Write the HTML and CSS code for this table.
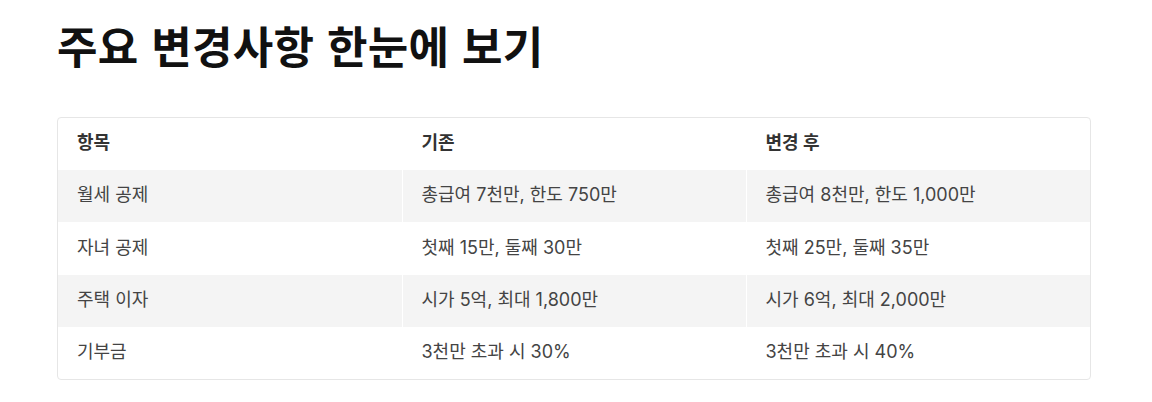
FILE: index.html
```html
<!DOCTYPE html>
<html lang="ko">
<head>
<meta charset="utf-8">
<link rel="stylesheet" href="styles.css">
</head>
<body>
<main class="page">
  <h1 class="title">주요 변경사항 한눈에 보기</h1>
  <div class="table-wrap">
    <table class="cmp">
      <thead>
        <tr><th>항목</th><th>기존</th><th>변경 후</th></tr>
      </thead>
      <tbody>
        <tr><td>월세 공제</td><td>총급여 7천만, 한도 750만</td><td>총급여 8천만, 한도 1,000만</td></tr>
        <tr><td>자녀 공제</td><td>첫째 15만, 둘째 30만</td><td>첫째 25만, 둘째 35만</td></tr>
        <tr><td>주택 이자</td><td>시가 5억, 최대 1,800만</td><td>시가 6억, 최대 2,000만</td></tr>
        <tr><td>기부금</td><td>3천만 초과 시 30%</td><td>3천만 초과 시 40%</td></tr>
      </tbody>
    </table>
  </div>
</main>
</body>
</html>
```
FILE: styles.css
```css
html, body {
  margin: 0;
  padding: 0;
  background: #ffffff;
}
body {
  font-family: "Inter", "Noto Sans CJK KR", sans-serif;
  color: #333333;
}
.page {
  padding: 15px 61px 0 57px;
}
.title {
  margin: 0 0 42px 0;
  font-family: "Noto Sans CJK KR", sans-serif;
  font-size: 44px;
  font-weight: 700;
  line-height: 60px;
  color: #111111;
  letter-spacing: 0.3px;
}
.table-wrap {
  border: 1px solid #e6e6e6;
  border-radius: 4px;
  overflow: hidden;
}
.cmp {
  width: 100%;
  border-collapse: collapse;
  table-layout: fixed;
}
.cmp th, .cmp td {
  text-align: left;
  padding: 0 19px 2px 19px;
  height: 50px;
  font-size: 18px;
  line-height: 24px;
  vertical-align: middle;
}
.cmp th {
  font-weight: 700;
  color: #333333;
  height: 50px;
}
.cmp td {
  color: #444444;
  font-weight: 400;
}
.cmp tbody tr:nth-child(odd) td {
  background: #f4f4f4;
}
.cmp tbody tr:nth-child(2) td {
  height: 51px;
}
.cmp td + td {
  border-left: 1px solid #ffffff;
}
.cmp th + th {
  border-left: 1px solid #ffffff;
}
```
